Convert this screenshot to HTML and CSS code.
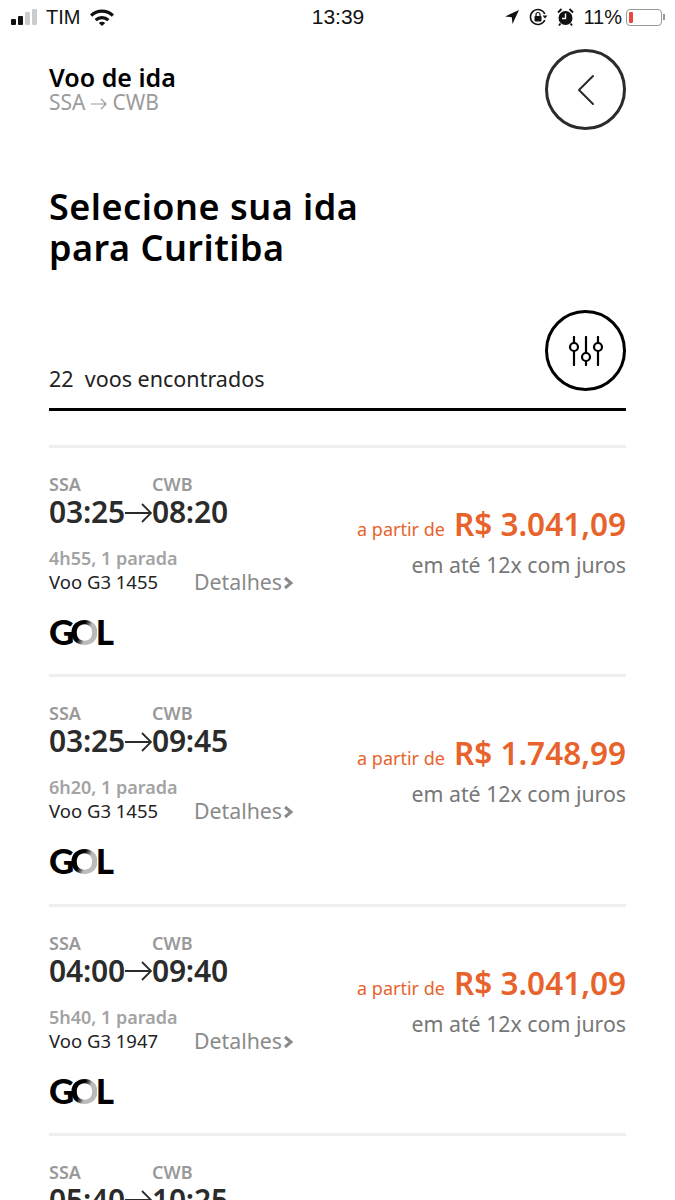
FILE: index.html
```html
<!DOCTYPE html>
<html lang="pt-BR">

<head>
    <meta charset="UTF-8">
    <meta name="viewport" content="width=device-width, initial-scale=1.0">
    <title>Voo de ida</title>
    <link rel="stylesheet" href="styles.css">
</head>

<body>
    <div class="status">
        <div class="status-left">
            <span class="signal"><i class="on"></i><i class="on"></i><i></i><i></i></span>
            <span>TIM</span>
            <svg class="wifi" width="26" height="18" viewBox="0 0 26 18">
                <path d="M1 6.500a17 17 0 0 1 24 0l-2.200 2.300a14 14 0 0 0-19.600 0z" />
                <path d="M5.500 11a11 11 0 0 1 15 0l-2.300 2.300a7.800 7.800 0 0 0-10.400 0z" />
                <path d="M9.800 15a5 5 0 0 1 6.400 0L13 18z" />
            </svg>
        </div>
        <div class="status-time">13:39</div>
        <div class="status-right">
            <svg width="16" height="16" viewBox="0 0 16 16">
                <path d="M15 1 1 7.500l6.800.7.700 6.800z" />
            </svg>
            <svg width="19" height="18" viewBox="0 0 19 18">
                <path d="M15.800 6A7.500 7.500 0 1 0 15.800 12" fill="none" stroke="#111" stroke-width="1.500" />
                <path d="M13.500 7.500h5l-2.500 3z" />
                <rect x="5.500" y="8" width="7" height="5.500" rx="1" />
                <path d="M7 8V6.500a2 2 0 0 1 4 0V8" fill="none" stroke="#111" stroke-width="1.200" />
            </svg>
            <svg width="17" height="18" viewBox="0 0 17 18">
                <circle cx="8.500" cy="10" r="7" />
                <path d="M1 4.500 4.500 1M12.500 1 16 4.500M3.500 15.500 2 17.500M13.500 15.500 15 17.500" stroke="#111" stroke-width="1.800" />
                <path d="M8.500 5.500V10.500H5" fill="none" stroke="#fff" stroke-width="1.400" />
            </svg>
            <span class="battery-text">11%</span>
            <span class="battery"><i></i></span>
            <span class="battery-tip"></span>
        </div>
    </div>

    <div class="page">
        <div class="top">
            <div class="top-text">
                <div class="top-title">Voo de ida</div>
                <div class="top-route">
                    SSA
                    <svg width="16" height="12" viewBox="0 0 16 12" fill="none" stroke="#9b9b9b" stroke-width="1.200">
                        <path d="M0 6h15M10 1l5 5-5 5" />
                    </svg>
                    CWB
                </div>
            </div>
            <button class="round">
                <svg width="20" height="32" viewBox="0 0 20 32">
                    <path d="M17 2 3 16l14 14" fill="none" stroke="#2b2b2b" stroke-width="2" stroke-linecap="round" stroke-linejoin="round" />
                </svg>
            </button>
        </div>

        <h1>Selecione sua ida<br>para Curitiba</h1>

        <div class="count-row">
            <div class="count">22&nbsp; voos encontrados</div>
            <button class="round round-black">
                <svg width="36" height="30" viewBox="0 0 36 30" fill="none" stroke="#000" stroke-width="2.200" stroke-linecap="round">
                    <path d="M6 1v6M6 15v14M18 1v16M18 25v4M30 1v6M30 15v14" />
                    <circle cx="6" cy="11" r="4" />
                    <circle cx="18" cy="21" r="4" />
                    <circle cx="30" cy="11" r="4" />
                </svg>
            </button>
        </div>
        <div class="rule"></div>

        <div class="flight">
            <div class="flight-left">
                <div class="codes"><span>SSA</span><span>CWB</span></div>
                <div class="times">03:25<svg class="arrow" width="27" height="20" viewBox="0 0 27 20"><path d="M0 10h26M17 1l9 9-9 9" /></svg>08:20</div>
                <div class="duration">4h55, 1 parada</div>
                <div class="number-row">
                    <span class="number">Voo G3 1455</span>
                    <span class="details">Detalhes<svg class="chevron" width="12" height="14" viewBox="0 0 12 14"><path d="M3 2l6 5-6 5" /></svg></span>
                </div>
                <div class="gol"><span>G</span><span class="gol-o">O</span><span class="gol-l">L</span></div>
            </div>
            <div class="flight-price">
                <div class="price-row"><span class="from">a partir de</span><span class="price">R$ 3.041,09</span></div>
                <div class="terms">em até 12x com juros</div>
            </div>
        </div>

        <div class="flight">
            <div class="flight-left">
                <div class="codes"><span>SSA</span><span>CWB</span></div>
                <div class="times">03:25<svg class="arrow" width="27" height="20" viewBox="0 0 27 20"><path d="M0 10h26M17 1l9 9-9 9" /></svg>09:45</div>
                <div class="duration">6h20, 1 parada</div>
                <div class="number-row">
                    <span class="number">Voo G3 1455</span>
                    <span class="details">Detalhes<svg class="chevron" width="12" height="14" viewBox="0 0 12 14"><path d="M3 2l6 5-6 5" /></svg></span>
                </div>
                <div class="gol"><span>G</span><span class="gol-o">O</span><span class="gol-l">L</span></div>
            </div>
            <div class="flight-price">
                <div class="price-row"><span class="from">a partir de</span><span class="price">R$ 1.748,99</span></div>
                <div class="terms">em até 12x com juros</div>
            </div>
        </div>

        <div class="flight">
            <div class="flight-left">
                <div class="codes"><span>SSA</span><span>CWB</span></div>
                <div class="times">04:00<svg class="arrow" width="27" height="20" viewBox="0 0 27 20"><path d="M0 10h26M17 1l9 9-9 9" /></svg>09:40</div>
                <div class="duration">5h40, 1 parada</div>
                <div class="number-row">
                    <span class="number">Voo G3 1947</span>
                    <span class="details">Detalhes<svg class="chevron" width="12" height="14" viewBox="0 0 12 14"><path d="M3 2l6 5-6 5" /></svg></span>
                </div>
                <div class="gol"><span>G</span><span class="gol-o">O</span><span class="gol-l">L</span></div>
            </div>
            <div class="flight-price">
                <div class="price-row"><span class="from">a partir de</span><span class="price">R$ 3.041,09</span></div>
                <div class="terms">em até 12x com juros</div>
            </div>
        </div>

        <div class="flight">
            <div class="flight-left">
                <div class="codes"><span>SSA</span><span>CWB</span></div>
                <div class="times">05:40<svg class="arrow" width="27" height="20" viewBox="0 0 27 20"><path d="M0 10h26M17 1l9 9-9 9" /></svg>10:25</div>
            </div>
        </div>
    </div>
</body>

</html>
```

FILE: styles.css
```css
* {
    margin: 0;
    padding: 0;
    box-sizing: border-box;
}

html,
body {
    height: 1200px;
    overflow: hidden;
}

body {
    background: #fff;
    color: #000;
    font-family: "Noto Sans", "Open Sans", sans-serif;
}

.status {
    height: 34px;
    padding: 0 10px 0 11px;
    display: flex;
    align-items: center;
    justify-content: space-between;
    font-family: "Liberation Sans", sans-serif;
    font-size: 20px;
    color: #111;
}

.status-left,
.status-right {
    flex: 1;
    display: flex;
    align-items: center;
}

.status-left {
    gap: 9px;
}

.status-right {
    justify-content: flex-end;
    gap: 9px;
}

.status svg {
    fill: #111;
}

.signal {
    display: flex;
    align-items: flex-end;
    gap: 2px;
    height: 16px;
}

.signal i {
    width: 5px;
    background: #ccc;
    border-radius: 1px;
}

.signal i:nth-child(1) { height: 6px; }
.signal i:nth-child(2) { height: 9px; }
.signal i:nth-child(3) { height: 13px; }
.signal i:nth-child(4) { height: 16px; }

.signal .on {
    background: #111;
}

.status-time {
    font-size: 21px;
}

.battery-text {
    margin-right: -5px;
}

.battery {
    width: 36px;
    height: 17px;
    border: 1.500px solid #999;
    border-radius: 4px;
    padding: 2px;
    display: flex;
}

.battery i {
    width: 4px;
    background: #ee4444;
    border-radius: 1px;
}

.battery-tip {
    width: 2px;
    height: 6px;
    margin-left: -8px;
    background: #999;
}

.page {
    padding: 0 49px;
}

.top {
    display: flex;
    justify-content: space-between;
    padding-top: 15px;
}

.top-text {
    padding-top: 14px;
}

.top-title {
    font-size: 25px;
    font-weight: 600;
    line-height: 29px;
}

.top-route {
    font-size: 21px;
    line-height: 20px;
    color: #9b9b9b;
}

.round {
    width: 81px;
    height: 81px;
    border: 3px solid #2b2b2b;
    border-radius: 50%;
    background: #fff;
    display: flex;
    align-items: center;
    justify-content: center;
    flex-shrink: 0;
}

.round-black {
    border-color: #000;
}

h1 {
    margin-top: 56px;
    font-size: 36px;
    line-height: 41px;
    font-weight: 600;
    letter-spacing: 0.5px;
}

.count-row {
    display: flex;
    justify-content: space-between;
    align-items: flex-end;
    margin-top: 42px;
}

.count {
    font-size: 21.500px;
    line-height: 28px;
    color: #222;
    margin-bottom: -2px;
}

.rule {
    height: 3px;
    margin-top: 17px;
    background: #000;
}

.flight {
    height: 229.300px;
    border-top: 3px solid #eeeeee;
    display: flex;
    justify-content: space-between;
}

.rule + .flight {
    margin-top: 34px;
}

.flight-left {
    padding-top: 25px;
}

.codes {
    display: flex;
    font-size: 18px;
    line-height: 22px;
    font-weight: 600;
    color: #999;
}

.codes span {
    width: 103px;
}

.times {
    display: flex;
    align-items: center;
    font-size: 30px;
    line-height: 34px;
    font-weight: 600;
    letter-spacing: -0.200px;
    color: #2b2b2b;
}

.arrow {
    margin-top: 1px;
    fill: none;
    stroke: #2b2b2b;
    stroke-width: 1.800;
}

.duration {
    margin-top: 17px;
    font-size: 18px;
    line-height: 24px;
    font-weight: 600;
    color: #a3a3a3;
}

.number-row {
    display: flex;
    align-items: center;
    line-height: 24px;
}

.number {
    width: 145px;
    font-size: 18.500px;
    color: #222;
}

.details {
    display: flex;
    align-items: center;
    font-size: 21.300px;
    color: #8a8a8a;
}

.chevron {
    margin-top: 2px;
    fill: none;
    stroke: #8a8a8a;
    stroke-width: 3;
}

.gol {
    display: flex;
    margin-top: 18px;
    font-family: "Lato", sans-serif;
    font-size: 35px;
    line-height: 38px;
    font-weight: 900;
    letter-spacing: -2px;
    color: #000;
}

.gol-o {
    background: linear-gradient(115deg, #000 45%, #bbb 62%);
    -webkit-background-clip: text;
    background-clip: text;
    color: transparent;
    margin-left: -2px;
}

.gol-l {
    margin-left: -1px;
}

.flight-price {
    padding-top: 56px;
    text-align: right;
}

.price-row {
    display: flex;
    align-items: baseline;
    justify-content: flex-end;
    gap: 9px;
    color: #e8632c;
}

.from {
    font-size: 18px;
}

.price {
    font-size: 31.500px;
    line-height: 40px;
    font-weight: 600;
}

.terms {
    margin-top: 6px;
    font-size: 21.300px;
    line-height: 30px;
    color: #777;
}
```
